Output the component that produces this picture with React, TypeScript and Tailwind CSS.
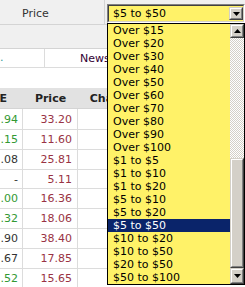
import { ReactNode } from 'react'

const options = [
  'Over $15', 'Over $20', 'Over $30', 'Over $40', 'Over $50', 'Over $60', 'Over $70',
  'Over $80', 'Over $90', 'Over $100', '$1 to $5', '$1 to $10', '$1 to $20', '$5 to $10',
  '$5 to $20', '$5 to $50', '$10 to $20', '$10 to $50', '$20 to $50', '$50 to $100'
]

const selected = '$5 to $50'

// pe: last digits of the P/E column, up = green
const rows = [
  { pe: '.94', up: true, price: '33.20', h: 'h-[21px]' },
  { pe: '.15', up: true, price: '11.60', h: 'h-[20px]' },
  { pe: '.08', up: false, price: '25.81', h: 'h-[20px]' },
  { pe: '-', up: false, price: '5.11', h: 'h-[19px]' },
  { pe: '.00', up: true, price: '16.36', h: 'h-[20px]' },
  { pe: '.32', up: true, price: '18.06', h: 'h-[20px]' },
  { pe: '.90', up: false, price: '38.40', h: 'h-[20px]' },
  { pe: '.67', up: false, price: '17.85', h: 'h-[20px]' },
  { pe: '.52', up: true, price: '15.65', h: 'h-[20px]' }
]

function Arrow({ up }: { up?: boolean }) {
  return (
    <svg width="7" height="4" viewBox="0 0 7 4">
      <path d={up ? 'M3.5 0 L7 4 L0 4 Z' : 'M0 0 L7 0 L3.5 4 Z'} fill="#000" />
    </svg>
  )
}

function Raised({ className, children }: { className: string; children: ReactNode }) {
  return (
    <div className={`border border-t-[#d4d0c8] border-l-[#d4d0c8] border-r-[#404040] border-b-[#404040] bg-[#d4d0c8] ${className}`}>
      <div className="w-full h-full flex items-center justify-center border border-t-white border-l-white border-r-[#808080] border-b-[#808080]">
        {children}
      </div>
    </div>
  )
}

export default function App() {
  return (
    <div className="relative w-[245px] h-[287px] overflow-hidden bg-white font-['DejaVu_Sans',sans-serif] text-[11px] leading-[13px]">
      {/* filter rows */}
      <div className="h-[25px] flex bg-[#f0f0f0] border-b border-[#d4d4d4]">
        <div className="w-[105px] border-r border-[#d4d4d4] pl-[22px] pt-[7px] text-[#333]">Price</div>
      </div>
      <div className="h-[24px] bg-[#f0f0f0] border-b border-[#d4d4d4]" />
      <div className="h-[19px] flex border-b border-[#dcdcdc]">
        <div className="w-[45px] border-r border-[#dcdcdc] pt-[2px] text-[#339999]">.</div>
        <div className="flex-1 pl-[35px] pt-[3px] text-[#330033]">News</div>
      </div>
      <div className="h-[20px]" />

      {/* table */}
      <div className="h-[21px] flex items-center bg-[#e2e2e2] border-b border-[#d4d4d4] font-bold text-[#222]">
        <div className="w-[23px] flex justify-end pr-[16px] whitespace-nowrap">P/E</div>
        <div className="w-[55px] text-center">Price</div>
        <div className="w-[70px] text-center">Change</div>
      </div>
      {rows.map((r) => (
        <div key={r.price} className={`${r.h} flex items-center border-b border-[#dcdcdc]`}>
          <div className={`w-[23px] h-full flex items-center justify-end pr-[4px] border-r border-[#dcdcdc] ${r.up ? 'text-[#339933]' : 'text-[#333]'}`}>
            {r.pe}
          </div>
          <div className="w-[55px] h-full flex items-center justify-end pr-[5px] border-r border-[#dcdcdc] text-[#993344]">
            {r.price}
          </div>
          <div className="flex-1" />
        </div>
      ))}

      {/* select box */}
      <div className="absolute left-[107px] top-[4px] w-[138px] h-[19px] border border-t-[#808080] border-l-[#808080] border-r-white border-b-white">
        <div className="w-full h-full flex items-center bg-[#fff268] border border-t-[#404040] border-l-[#404040] border-r-[#d4d0c8] border-b-[#d4d0c8]">
          <span className="flex-1 pl-[4px] text-black">{selected}</span>
          <Raised className="w-[14px] h-[13px]">
            <Arrow />
          </Raised>
        </div>
      </div>

      {/* open list */}
      <div className="absolute left-[107px] top-[23px] w-[138px] h-[262px] flex border border-black bg-[#fff268]">
        <div className="w-[122px]">
          {options.map((o) => (
            <div
              key={o}
              className={`h-[13px] pl-[5px] whitespace-nowrap ${o === selected ? 'bg-[#0a246a] text-white' : 'text-black'}`}
            >
              {o}
            </div>
          ))}
        </div>
        <div className="flex-1 flex flex-col">
          <Raised className="h-[14px]">
            <Arrow up />
          </Raised>
          <div className="h-[120px] bg-[image:conic-gradient(#ffffff_25%,#d4d0c8_0_50%,#ffffff_0_75%,#d4d0c8_0)] bg-[length:2px_2px]" />
          <Raised className="h-[110px]">
            <span />
          </Raised>
          <Raised className="flex-1">
            <Arrow />
          </Raised>
        </div>
      </div>
    </div>
  )
}
